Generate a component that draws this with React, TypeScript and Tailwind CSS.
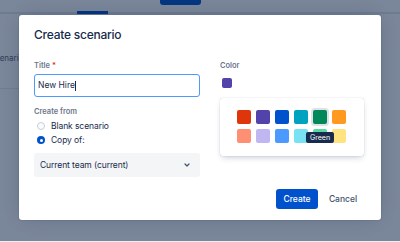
import { useState } from "react";

const swatches = [
  { name: "Red", color: "#de350b" },
  { name: "Purple", color: "#5243aa" },
  { name: "Blue", color: "#0052cc" },
  { name: "Teal", color: "#00a3bf" },
  { name: "Green", color: "#00875a" },
  { name: "Orange", color: "#ff991f" },
  { name: "Light red", color: "#ff8f73" },
  { name: "Light purple", color: "#c0b6f2" },
  { name: "Light blue", color: "#4c9aff" },
  { name: "Light teal", color: "#79e2f2" },
  { name: "Light green", color: "#57d9a3" },
  { name: "Light orange", color: "#ffe380" },
];

export default function App() {
  const [source, setSource] = useState("copy");
  const [color] = useState("#5243aa");
  const hovered = "Green";

  return (
    <div
      className="relative w-[400px] h-[242px] overflow-hidden bg-[#7a8699] flex flex-col"
      style={{ fontFamily: "Inter, 'Noto Sans', sans-serif" }}
    >
      {/* page behind the blanket */}
      <div className="h-[14px] border-b-2 border-[#6f7b90] flex items-start shrink-0">
        <div className="ml-[77px] self-end w-[31px] h-[3px] bg-[#053681] mb-[-2px]" />
        <div className="ml-[52px] w-[41px] h-[5px] bg-[#053681] rounded-b-[3px]" />
      </div>
      <div className="flex-1">
        <p className="mt-[38px] ml-[-10px] text-[8px] text-[#2f3d57] leading-[12px]">Scenario</p>
        <div className="mt-[24px] h-px w-[19px] bg-[#707c91]" />
      </div>
      <div className="h-px bg-[#eceef1] shrink-0" />

      {/* modal */}
      <div className="absolute left-[19px] top-[15px] w-[362px] h-[205px] bg-white rounded-[3px] shadow-[0_0_0_1px_rgba(9,30,66,0.08),0_0_20px_-6px_rgba(9,30,66,0.31)] flex flex-col text-[#172b4d]">
        <h2 className="pt-[12px] px-[15px] text-[12px] leading-[16px] font-medium tracking-[-0.02em]">Create scenario</h2>

        <div className="mt-[18px] pl-[15px] pr-[17px] flex gap-[20px]">
          <div className="w-[166px] flex flex-col">
            <label className="text-[7.5px] leading-[10px] font-semibold text-[#6b778c]">
              Title <span className="text-[#de350b]">*</span>
            </label>
            <div className="mt-[3px] h-[23px] border-[1.5px] border-[#4c9aff] rounded-[3px] flex items-center pl-[3px] text-[8.5px]">
              <span>New Hire</span>
              <span className="w-px h-[10px] bg-[#172b4d]" />
            </div>

            <p className="mt-[10px] text-[7.5px] leading-[10px] font-semibold text-[#6b778c]">Create from</p>
            <div className="mt-[2px] flex flex-col">
              {[
                { id: "blank", label: "Blank scenario" },
                { id: "copy", label: "Copy of:" },
              ].map((opt) => (
                <button
                  key={opt.id}
                  onClick={() => setSource(opt.id)}
                  className="h-[14px] flex items-center gap-[6px] pl-[3px] text-[8.5px] text-left tracking-[-0.01em]"
                >
                  {source === opt.id ? (
                    <span className="w-[8px] h-[8px] rounded-full bg-[#0052cc] flex items-center justify-center">
                      <span className="w-[3px] h-[3px] rounded-full bg-white" />
                    </span>
                  ) : (
                    <span className="w-[8px] h-[8px] rounded-full border border-[#c9ced6] bg-[#fafbfc]" />
                  )}
                  <span>{opt.label}</span>
                </button>
              ))}
            </div>

            <div className="mt-[6px] h-[24px] bg-[#f4f5f7] rounded-[3px] flex items-center justify-between pl-[6px] pr-[10px] text-[8.5px] tracking-[-0.01em]">
              <span>Current team (current)</span>
              <svg width="6" height="4" viewBox="0 0 6 4" fill="none">
                <path d="M1 1l2 2 2-2" stroke="#42526e" strokeWidth="1.2" strokeLinecap="round" strokeLinejoin="round" />
              </svg>
            </div>
          </div>

          <div className="w-[144px] flex flex-col">
            <label className="text-[7.5px] leading-[10px] font-semibold text-[#6b778c]">Color</label>
            <button className="mt-[5px] w-[14px] h-[14px] p-[2px]">
              <span className="block w-[10px] h-[10px] rounded-[2px]" style={{ backgroundColor: color }} />
            </button>

            <div className="mt-[8px] bg-white rounded-[3px] shadow-[0_3px_6px_-2px_rgba(9,30,66,0.25),0_0_1px_rgba(9,30,66,0.31)] pt-[12px] pb-[13px] pl-[17px]">
              <div className="grid grid-cols-[repeat(6,14px)] gap-x-[5px] gap-y-[5px]">
                {swatches.map((s) => (
                  <div key={s.name} className="relative w-[14px] h-[14px]">
                    <span
                      className={`block w-[14px] h-[14px] rounded-[2px] ${s.name === hovered ? "ring-2 ring-[#dfe1e6]" : ""}`}
                      style={{ backgroundColor: s.color }}
                    />
                    {s.name === hovered && (
                      <span className="absolute z-10 top-[22px] left-1/2 -translate-x-1/2 h-[11px] px-[4px] rounded-[2px] bg-[#172b4d] text-white text-[7px] leading-[11px] whitespace-nowrap">
                        {s.name}
                      </span>
                    )}
                  </div>
                ))}
              </div>
            </div>
          </div>
        </div>

        <div className="mt-auto pb-[11px] pr-[17px] flex justify-end gap-[4px]">
          <button className="w-[42px] h-[20px] rounded-[3px] bg-[#0052cc] text-white text-[8.5px] font-medium">Create</button>
          <button className="w-[42px] h-[20px] rounded-[3px] text-[#42526e] text-[8.5px] font-medium">Cancel</button>
        </div>
      </div>
    </div>
  );
}
